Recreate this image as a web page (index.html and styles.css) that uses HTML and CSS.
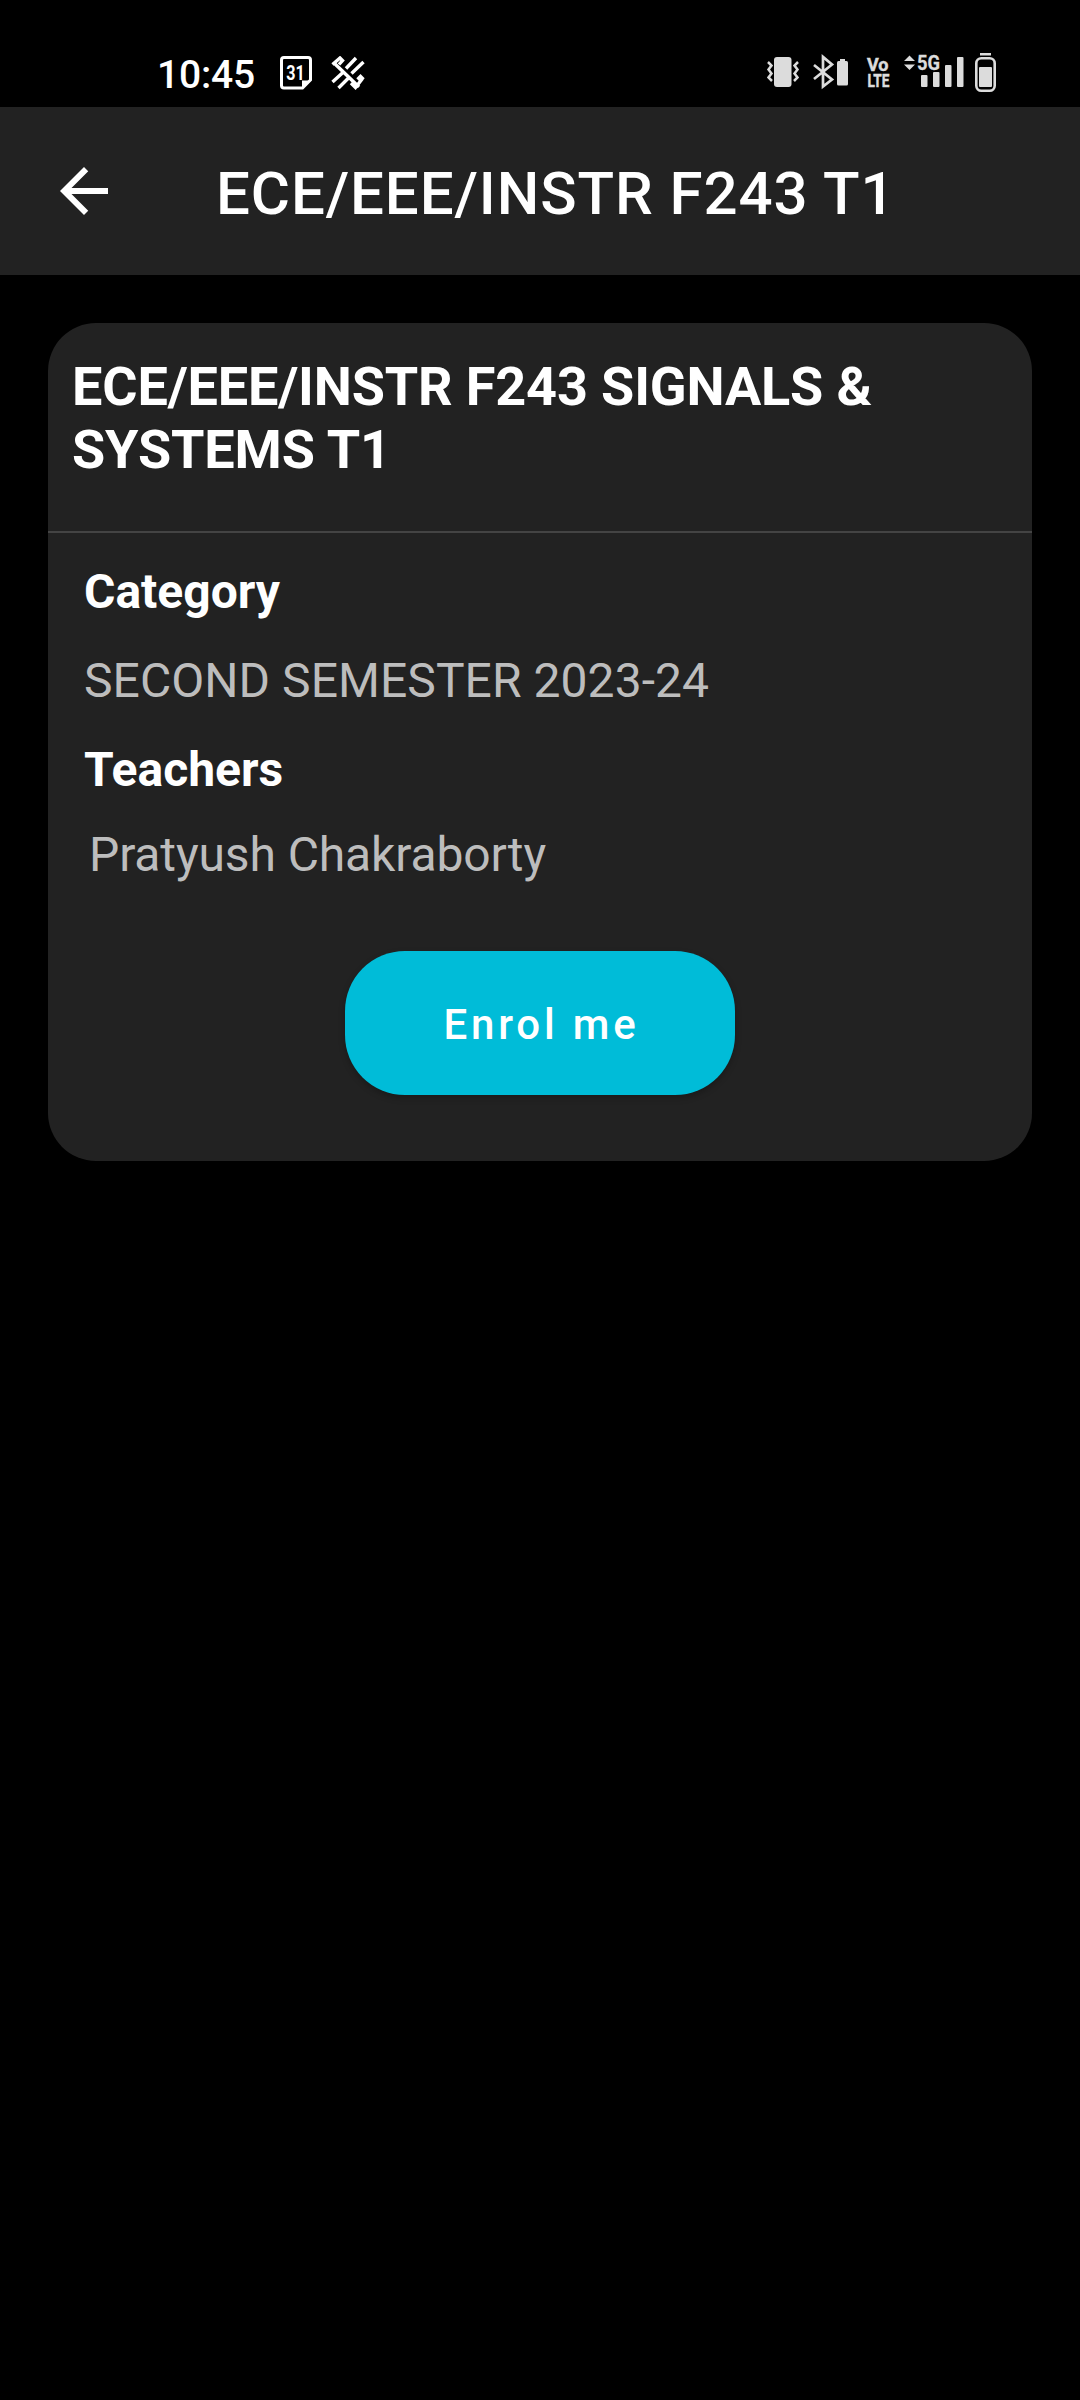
FILE: index.html
```html
<!DOCTYPE html>
<html lang="en">
<head>
<meta charset="utf-8">
<title>ECE/EEE/INSTR F243 T1</title>
<link rel="stylesheet" href="styles.css">
</head>
<body>
<div class="status-bar">
  <div class="status-left">
    <span class="clock">10:45</span>
    <svg class="icon-calendar" width="32" height="34" viewBox="0 0 32 34">
      <path d="M4 1.500H28Q30.500 1.500 30.500 4V24L22.500 32H4Q1.500 32 1.500 29.500V4Q1.500 1.500 4 1.500Z" fill="none" stroke="#fff" stroke-width="3"/>
      <path d="M22 33V24.500H31Z" fill="#fff"/>
      <text x="6.300" y="23.500" textLength="18.500" lengthAdjust="spacingAndGlyphs" class="calendar-day">31</text>
    </svg>
    <svg class="icon-muted" width="34" height="34" viewBox="0 0 34 34" fill="none" stroke="#fff" stroke-width="3.400">
      <path d="M2.500 6.500L28 31"/>
      <path d="M1.500 8.500L9 2L11.500 4.500L8 8.500"/>
      <path d="M31.500 22.500L24.500 31.500L20 27M26.500 23.500L29.500 20.500L32.500 23.500"/>
      <path d="M15 12.500L25 2M20.500 17.500L32.500 6M1.500 26L13 15.500M7.500 32L18.500 21"/>
    </svg>
  </div>
  <div class="status-right">
    <svg width="236" height="42" viewBox="0 0 236 42" fill="#dcdcdc">
      <rect x="8" y="5" width="17.500" height="30" rx="3"/>
      <path d="M2 10L5.500 13.500L2.500 17.500L5.500 21.500L2.500 25.500L6 29M32 10L28.500 13.500L31.500 17.500L28.500 21.500L31.500 25.500L28 29" fill="none" stroke="#dcdcdc" stroke-width="2.500"/>
      <path d="M48 13L66 27.500L57 34.500V5L66 12.500L48 27" fill="none" stroke="#dcdcdc" stroke-width="2.700"/>
      <rect x="71" y="9" width="11" height="24.500" rx="1.500"/>
      <rect x="74" y="7" width="5" height="3"/>
      <text x="101" y="18.800" textLength="21.500" lengthAdjust="spacingAndGlyphs" class="badge-text">Vo</text>
      <text x="101.500" y="34.500" textLength="22" lengthAdjust="spacingAndGlyphs" class="badge-text">LTE</text>
      <path d="M138 9L143.500 3.500L149 9ZM138 12.500L143.500 18L149 12.500Z"/>
      <text x="151" y="18.300" textLength="23" lengthAdjust="spacingAndGlyphs" class="network-text">5G</text>
      <rect x="155" y="23" width="6.500" height="12" rx="1"/>
      <rect x="167" y="20" width="6.500" height="15" rx="1"/>
      <rect x="179" y="13" width="6.500" height="22" rx="1"/>
      <rect x="191" y="5" width="6.500" height="30" rx="1"/>
      <rect x="214" y="1" width="11" height="2.500"/>
      <rect x="210.300" y="6.300" width="18.400" height="32.400" rx="5" fill="none" stroke="#dcdcdc" stroke-width="2.600"/>
      <rect x="213" y="15" width="13" height="20" rx="1"/>
    </svg>
  </div>
</div>
<header class="app-bar">
  <svg class="back" width="72" height="72" viewBox="0 0 24 24" fill="#fff"><path d="M20 11H7.830l5.590-5.590L12 4l-8 8 8 8 1.410-1.410L7.830 13H20v-2z"/></svg>
  <h1 class="app-title">ECE/EEE/INSTR F243 T1</h1>
</header>
<main class="card">
  <h2 class="course-name">ECE/EEE/INSTR F243 SIGNALS &amp; SYSTEMS T1</h2>
  <div class="details">
    <h3 class="label">Category</h3>
    <p class="value">SECOND SEMESTER 2023-24</p>
    <h3 class="label">Teachers</h3>
    <p class="value teacher">Pratyush Chakraborty</p>
    <button class="enrol" type="button">Enrol me</button>
  </div>
</main>
</body>
</html>
```

FILE: styles.css
```css
* { box-sizing: border-box; margin: 0; }
body { background: #000; color: #fff; font-family: Roboto, sans-serif; min-height: 2400px; }
svg { display: block; flex: none; }

.status-bar { display: flex; justify-content: space-between; height: 107px; padding: 0 78px 0 157px; }
.status-left { display: flex; padding-top: 56px; }
.clock { width: 123px; font-size: 39px; font-weight: 500; line-height: 38px; letter-spacing: -.2px; }
.icon-muted { margin-left: 19px; }
.status-right { padding-top: 52px; }
.calendar-day { font-size: 20px; font-weight: 700; fill: #fff; }
.badge-text { font-size: 19px; font-weight: 700; stroke: #dcdcdc; stroke-width: .5px; }
.network-text { font-size: 20px; font-weight: 700; stroke: #dcdcdc; stroke-width: .3px; }

.app-bar { display: flex; align-items: center; height: 168px; padding: 0 48px; background: #222; }
.app-title { margin-left: 96px; padding-top: 5px; font-size: 60px; font-weight: 500; line-height: 70px; letter-spacing: .92px; white-space: nowrap; }

.card { height: 838px; margin: 48px 48px 0; border-radius: 48px; background: #222; }
.course-name { height: 210px; padding: 32px 24px 0; border-bottom: 2px solid #444; font-size: 54px; font-weight: 700; line-height: 63px; letter-spacing: -.15px; }
.details { display: flex; flex-direction: column; padding: 31px 36px 0; }
.label { font-size: 48px; font-weight: 700; line-height: 56px; }
.value { margin: 33px 0; font-size: 48px; line-height: 56px; letter-spacing: .06px; color: #bdbdbd; }
.teacher { margin: 29px 0 0 5px; letter-spacing: -.12px; }
.enrol { align-self: center; width: 390px; height: 144px; margin-top: 68px; padding: 3px 0 0 3px; border: 0; border-radius: 60px; background: #00bcd8; color: #fff; font: 500 42px/50px Roboto, sans-serif; letter-spacing: 3.8px; box-shadow: 0 3px 6px rgba(0, 0, 0, .25); }
```
